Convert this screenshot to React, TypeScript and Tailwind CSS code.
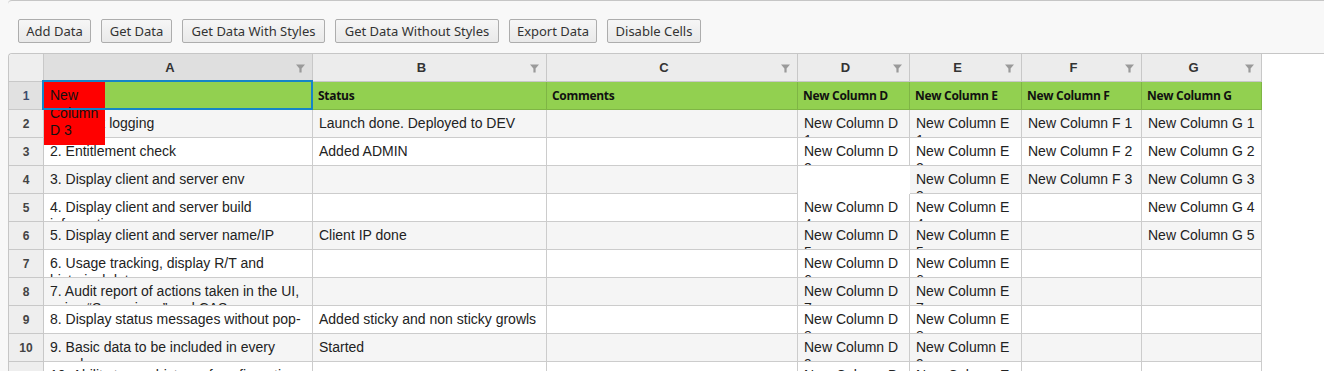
import React from "react";

const colW = [
  "w-[269px]",
  "w-[234px]",
  "w-[251px]",
  "w-[112px]",
  "w-[112px]",
  "w-[120px]",
  "w-[120px]",
];

const letters = ["A", "B", "C", "D", "E", "F", "G"];

const buttons: { label: string; w: string }[] = [
  { label: "Add Data", w: "w-[73px]" },
  { label: "Get Data", w: "w-[71px]" },
  { label: "Get Data With Styles", w: "w-[143px]" },
  { label: "Get Data Without Styles", w: "w-[164px]" },
  { label: "Export Data", w: "w-[88px]" },
  { label: "Disable Cells", w: "w-[94px]" },
];

const aCol = [
  "1. Check logging",
  "2. Entitlement check",
  "3. Display client and server env",
  "4. Display client and server build information",
  "5. Display client and server name/IP",
  "6. Usage tracking, display R/T and historical data",
  "7. Audit report of actions taken in the UI, using \u201cSave views\u201d and CAS",
  "8. Display status messages without pop-ups",
  "9. Basic data to be included in every growl",
  "10. Ability to see history of configuration and actions",
];

const bCol: Record<number, string> = {
  0: "Launch done. Deployed to DEV",
  1: "Added ADMIN",
  4: "Client IP done",
  7: "Added sticky and non sticky growls",
  8: "Started",
};

function Funnel() {
  return (
    <svg width="9" height="9" viewBox="0 0 9 9" className="block">
      <path d="M0 0.5H9L5.6 4.4V8.5H3.4V4.4Z" fill="#9a9a9a" />
    </svg>
  );
}

function cellValue(r: number, c: number): string {
  if (c === 0) return aCol[r] ?? "";
  if (c === 1) return bCol[r] ?? "";
  if (c === 2) return "";
  if (c === 3) return r === 2 ? "" : `New Column D ${r + 1}`;
  if (c === 4) return `New Column E ${r + 1}`;
  if (c === 5) return r < 3 ? `New Column F ${r + 1}` : "";
  if (c === 6) return r < 5 ? `New Column G ${r + 1}` : "";
  return "";
}

export default function App() {
  const dataRows = Array.from({ length: 10 }, (_, i) => i);
  const greenRow = [
    "",
    "Status",
    "Comments",
    "New Column D",
    "New Column E",
    "New Column F",
    "New Column G",
  ];

  return (
    <div className="w-[1324px] h-[371px] overflow-hidden bg-[#f8f8f8] font-['Liberation_Sans',Arial,sans-serif] text-[#222]">
      {/* toolbar */}
      <div className="ml-[8px] h-[53px] border-t border-[#c6c6c6] rounded-tl-[4px] pt-[18px] pl-[10px] flex gap-[10px]">
        {buttons.map((b) => (
          <button
            key={b.label}
            className={`${b.w} h-[24px] border border-[#adadad] rounded-[2px] bg-gradient-to-b from-[#f6f6f6] to-[#e9e9e9] text-[13px] text-[#333] font-['Noto_Sans','Open_Sans',sans-serif] leading-none flex items-center justify-center whitespace-nowrap`}
          >
            {b.label}
          </button>
        ))}
      </div>

      {/* grid */}
      <div className="ml-[8px] border-l border-t border-[#c6c6c6] rounded-tl-[4px] bg-white h-[400px]">
        {/* header */}
        <div className="flex h-[28px]">
          <div className="w-[35px] shrink-0 bg-[#eeeeee] border-r border-b border-[#c8c8c8] rounded-tl-[4px]" />
          {letters.map((l, i) => (
            <div
              key={l}
              className={`${colW[i]} shrink-0 relative flex items-center justify-center pr-[16px] border-r border-b border-[#c8c8c8] ${i === 0 ? "bg-[#dfdfdf]" : "bg-[#ececec]"} text-[13px] font-bold text-[#333]`}
            >
              {l}
              <div className="absolute right-[7px] top-[10px]">
                <Funnel />
              </div>
            </div>
          ))}
        </div>

        {/* green row 1 */}
        <div className="flex h-[28px]">
          <div className="w-[35px] shrink-0 bg-[#e1e1e1] border-r border-b border-[#c8c8c8] flex items-center justify-center text-[12px] font-bold text-[#3d4a6b]">
            1
          </div>
          {greenRow.map((t, i) => (
            <div
              key={i}
              className={`${colW[i]} shrink-0 relative bg-[#92d050] border-r border-b border-[#7fb545] flex items-center px-[5px] text-[12px] font-bold tracking-[-0.3px] text-[#111] font-['Open_Sans','Noto_Sans',sans-serif] whitespace-nowrap`}
            >
              {i === 0 ? (
                <>
                  <div className="absolute left-0 top-0 w-[61px] z-10 bg-[#ff0000] px-[6px] pt-[5px] pb-[5px] text-[14px] leading-[17.5px] tracking-normal font-normal text-[#111] font-['Liberation_Sans',Arial,sans-serif] whitespace-normal">
                    New Column D 3
                  </div>
                  <div className="absolute -left-[2px] -top-[2px] -right-[1px] -bottom-[1px] border-2 border-[#1584c8] z-20 pointer-events-none" />
                </>
              ) : (
                t
              )}
            </div>
          ))}
        </div>

        {/* data rows */}
        {dataRows.map((r) => {
          const gray = r % 2 === 0;
          return (
            <div key={r} className="flex h-[28px]">
              <div className="w-[35px] shrink-0 bg-[#eeeeee] border-r border-b border-[#c8c8c8] flex items-center justify-center text-[12px] font-bold text-[#444]">
                {r + 2}
              </div>
              {letters.map((_, c) => {
                const special = c === 3 && r === 2;
                return (
                  <div
                    key={c}
                    className={`${colW[c]} shrink-0 relative overflow-hidden border-r border-b ${special ? "border-transparent bg-white" : `border-[#cccccc] ${gray ? "bg-[#f5f5f5]" : "bg-white"}`} px-[6px] pt-[5px] text-[14px] leading-[17px] break-words`}
                  >
                    {cellValue(r, c)}
                  </div>
                );
              })}
            </div>
          );
        })}
      </div>
    </div>
  );
}
